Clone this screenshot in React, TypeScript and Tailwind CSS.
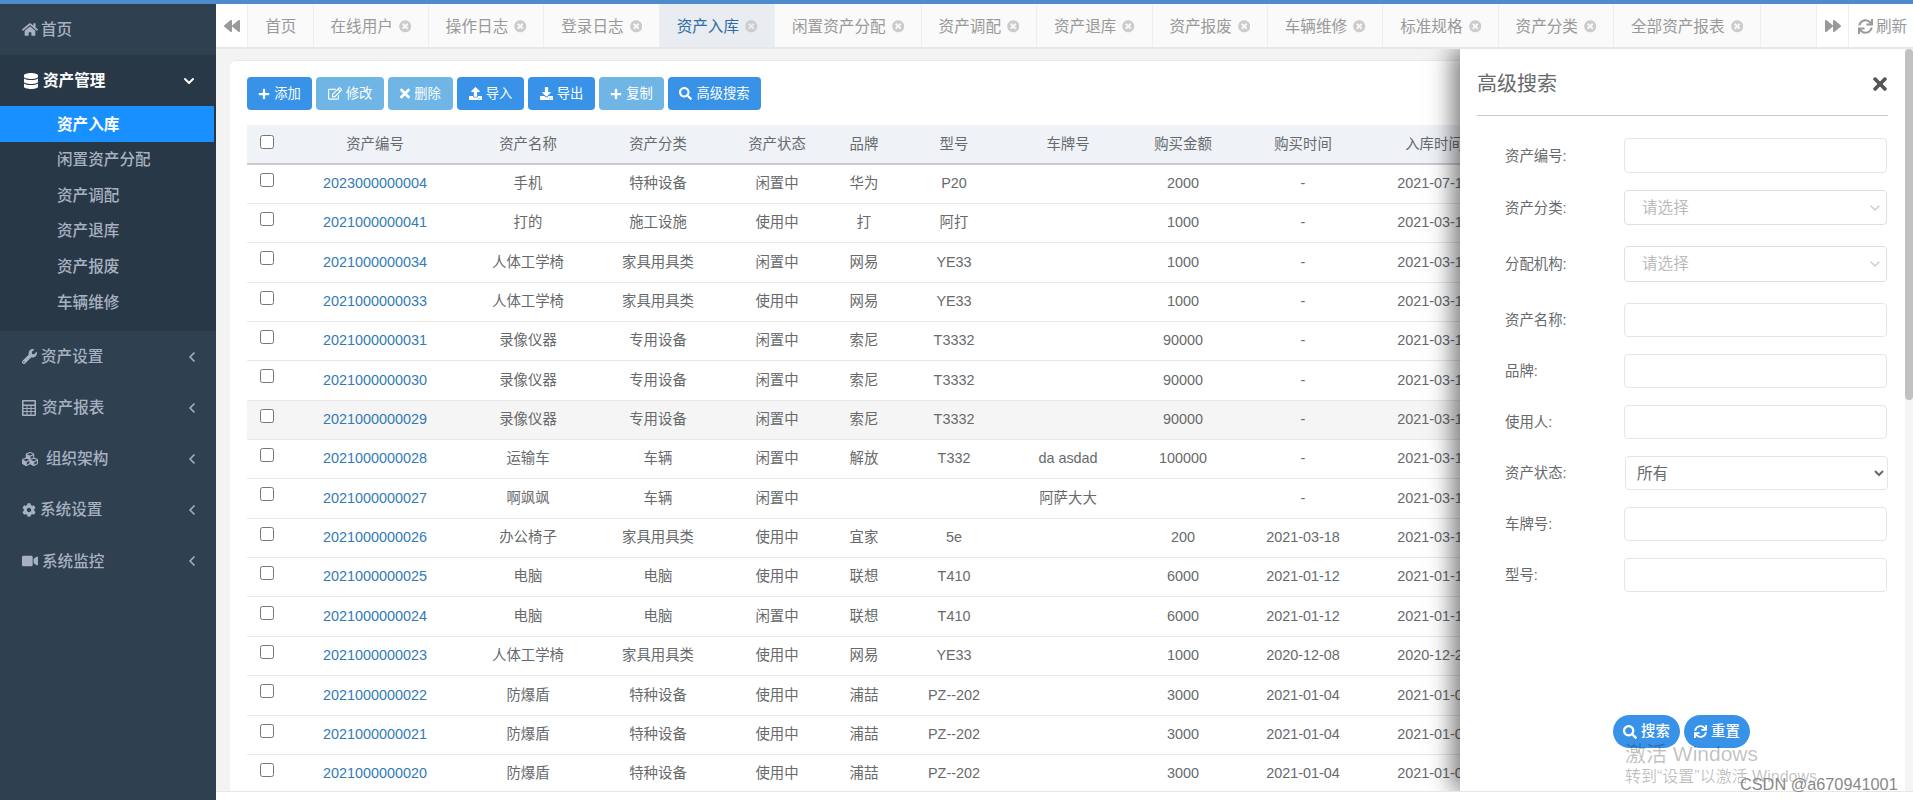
import type { ComponentType } from "react";
import {
  FaBackward,
  FaCog,
  FaCubes,
  FaDatabase,
  FaDownload,
  FaForward,
  FaHome,
  FaPlus,
  FaRegEdit,
  FaSearch,
  FaSync,
  FaTimes,
  FaTimesCircle,
  FaUpload,
  FaVideo,
  FaWrench,
} from "react-icons/fa";
import { ChevronDown, ChevronLeft } from "lucide-react";

type Icon = ComponentType<{ className?: string }>;

// fa-calculator from the old icon font, react-icons only has the solid one
const CalculatorIcon = ({ className }: { className?: string }) => (
  <svg viewBox="0 0 14 16" fill="currentColor" className={className}>
    <path
      fillRule="evenodd"
      d="M1 0h12a1 1 0 0 1 1 1v14a1 1 0 0 1-1 1H1a1 1 0 0 1-1-1V1a1 1 0 0 1 1-1zM1.5 1.5v3h11v-3zM1.5 6v2h3V6zM5.5 6v2h3V6zM9.5 6v2h3V6zM1.5 9v2h3V9zM5.5 9v2h3V9zM9.5 9v2h3V9zM1.5 12v2.5h3V12zM5.5 12v2.5h3V12zM9.5 12v2.5h3V12z"
    />
  </svg>
);

const subMenu = ["资产入库", "闲置资产分配", "资产调配", "资产退库", "资产报废", "车辆维修"];

const bottomMenu: { label: string; icon: Icon; iconClass: string }[] = [
  { label: "资产设置", icon: FaWrench, iconClass: "w-[15px] h-[15px] mr-[4px]" },
  { label: "资产报表", icon: CalculatorIcon, iconClass: "w-[14px] h-[16px] mr-[6px]" },
  { label: "组织架构", icon: FaCubes, iconClass: "w-[16px] h-[16px] mr-[8px]" },
  { label: "系统设置", icon: FaCog, iconClass: "w-[14px] h-[14px] mr-[4px]" },
  { label: "系统监控", icon: FaVideo, iconClass: "w-[16px] h-[16px] mr-[4px]" },
];

const tabs = [
  "在线用户",
  "操作日志",
  "登录日志",
  "资产入库",
  "闲置资产分配",
  "资产调配",
  "资产退库",
  "资产报废",
  "车辆维修",
  "标准规格",
  "资产分类",
  "全部资产报表",
];

const toolbar: { label: string; icon: Icon; className: string; iconClass: string }[] = [
  { label: "添加", icon: FaPlus, className: "w-[65px] bg-[#3893e8]", iconClass: "w-[12px] h-[12px]" },
  { label: "修改", icon: FaRegEdit, className: "w-[68px] bg-[#6fb5e6]", iconClass: "w-[14px] h-[13px]" },
  { label: "删除", icon: FaTimes, className: "w-[65px] bg-[#6fb5e6]", iconClass: "w-[10px] h-[15px]" },
  { label: "导入", icon: FaUpload, className: "w-[67px] bg-[#3893e8]", iconClass: "w-[13px] h-[13px]" },
  { label: "导出", icon: FaDownload, className: "w-[67px] bg-[#3893e8]", iconClass: "w-[13px] h-[13px]" },
  { label: "复制", icon: FaPlus, className: "w-[65px] bg-[#6fb5e6]", iconClass: "w-[12px] h-[12px]" },
  { label: "高级搜索", icon: FaSearch, className: "w-[93px] bg-[#3893e8]", iconClass: "w-[13px] h-[13px]" },
];

const columns = [38, 180, 126, 134, 104, 70, 110, 118, 112, 128, 134];
const headers = ["资产编号", "资产名称", "资产分类", "资产状态", "品牌", "型号", "车牌号", "购买金额", "购买时间", "入库时间"];

const rows = [
  ["2023000000004", "手机", "特种设备", "闲置中", "华为", "P20", "", "2000", "-", "2021-07-14"],
  ["2021000000041", "打的", "施工设施", "使用中", "打", "阿打", "", "1000", "-", "2021-03-18"],
  ["2021000000034", "人体工学椅", "家具用具类", "闲置中", "网易", "YE33", "", "1000", "-", "2021-03-18"],
  ["2021000000033", "人体工学椅", "家具用具类", "使用中", "网易", "YE33", "", "1000", "-", "2021-03-18"],
  ["2021000000031", "录像仪器", "专用设备", "闲置中", "索尼", "T3332", "", "90000", "-", "2021-03-18"],
  ["2021000000030", "录像仪器", "专用设备", "闲置中", "索尼", "T3332", "", "90000", "-", "2021-03-18"],
  ["2021000000029", "录像仪器", "专用设备", "闲置中", "索尼", "T3332", "", "90000", "-", "2021-03-18"],
  ["2021000000028", "运输车", "车辆", "闲置中", "解放", "T332", "da asdad", "100000", "-", "2021-03-18"],
  ["2021000000027", "啊飒飒", "车辆", "闲置中", "", "", "阿萨大大", "", "-", "2021-03-18"],
  ["2021000000026", "办公椅子", "家具用具类", "使用中", "宜家", "5e", "", "200", "2021-03-18", "2021-03-18"],
  ["2021000000025", "电脑", "电脑", "使用中", "联想", "T410", "", "6000", "2021-01-12", "2021-01-18"],
  ["2021000000024", "电脑", "电脑", "闲置中", "联想", "T410", "", "6000", "2021-01-12", "2021-01-18"],
  ["2021000000023", "人体工学椅", "家具用具类", "使用中", "网易", "YE33", "", "1000", "2020-12-08", "2020-12-28"],
  ["2021000000022", "防爆盾", "特种设备", "使用中", "浦喆", "PZ--202", "", "3000", "2021-01-04", "2021-01-08"],
  ["2021000000021", "防爆盾", "特种设备", "使用中", "浦喆", "PZ--202", "", "3000", "2021-01-04", "2021-01-08"],
  ["2021000000020", "防爆盾", "特种设备", "使用中", "浦喆", "PZ--202", "", "3000", "2021-01-04", "2021-01-08"],
];

const fields: { label: string; kind: "input" | "choose" | "status"; rowClass: string }[] = [
  { label: "资产编号:", kind: "input", rowClass: "h-[35px] mb-[17px]" },
  { label: "资产分类:", kind: "choose", rowClass: "h-[35px] mb-[21px]" },
  { label: "分配机构:", kind: "choose", rowClass: "h-[36px] mb-[21px]" },
  { label: "资产名称:", kind: "input", rowClass: "h-[34px] mb-[17px]" },
  { label: "品牌:", kind: "input", rowClass: "h-[34px] mb-[17px]" },
  { label: "使用人:", kind: "input", rowClass: "h-[34px] mb-[17px]" },
  { label: "资产状态:", kind: "status", rowClass: "h-[34px] mb-[17px]" },
  { label: "车牌号:", kind: "input", rowClass: "h-[34px] mb-[17px]" },
  { label: "型号:", kind: "input", rowClass: "h-[34px] mb-[17px]" },
];

const Sidebar = () => (
  <aside className="w-[216px] shrink-0 bg-[#2f4050] text-[15.6px] font-medium text-[#a7b1c2]">
    <div className="flex h-[51px] items-center pl-[22px]">
      <FaHome className="mr-[3px] h-[15px] w-[16px]" />
      首页
    </div>
    <div className="h-[276px] bg-[#293846]">
      <div className="flex h-[51px] items-center pt-[1px] pr-[19px] pl-[24px] font-bold text-white">
        <FaDatabase className="mr-[5px] h-[16px] w-[14px]" />
        <span className="flex-1">资产管理</span>
        <ChevronDown className="h-[16px] w-[16px]" strokeWidth={3} />
      </div>
      {subMenu.map((item, i) => (
        <div
          key={item}
          className={`flex h-[35.6px] items-center pt-[1px] pl-[57px] ${i === 0 ? "w-[214px] bg-[#1890ff] font-bold text-white" : ""}`}
        >
          {item}
        </div>
      ))}
    </div>
    {bottomMenu.map((item) => (
      <div key={item.label} className="flex h-[51.2px] items-center pr-[16px] pl-[22px]">
        <item.icon className={item.iconClass} />
        <span className="flex-1">{item.label}</span>
        <ChevronLeft className="h-[16px] w-[16px]" strokeWidth={2.5} />
      </div>
    ))}
  </aside>
);

const TabBar = () => (
  <div className="relative z-20 flex h-[45px] shrink-0 border-b-2 border-[#e7e7e7] bg-white text-[15.6px] text-[#999999]">
    <div className="flex w-[32px] items-center justify-center border-r border-[#eeeeee]">
      <FaBackward className="h-[16px] w-[16px]" />
    </div>
    <div className="flex flex-1 bg-[#fafafa]">
      <div className="flex items-center border-r border-[#eeeeee] pt-[2px] pr-[16.25px] pl-[17.25px]">首页</div>
      {tabs.map((tab) => (
        <div
          key={tab}
          className={`flex items-center gap-[6px] border-r border-[#eeeeee] px-[16.75px] pt-[2px] ${tab === "资产入库" ? "bg-[#e9ecf1] text-[#2e6da4]" : ""}`}
        >
          {tab}
          <FaTimesCircle className="h-[12.5px] w-[12.5px] text-[#cccccc]" />
        </div>
      ))}
    </div>
    <div className="flex w-[33px] items-center justify-center border-x border-[#eeeeee]">
      <FaForward className="h-[16px] w-[16px]" />
    </div>
    <div className="flex w-[64px] items-center gap-[3px] pt-[2px] pl-[9px]">
      <FaSync className="h-[15px] w-[15px]" />
      刷新
    </div>
  </div>
);

const AssetTable = () => (
  <table className="w-[1254px] table-fixed border-collapse text-center text-[14.4px] text-[#676a6c]">
    <colgroup>
      {columns.map((w, i) => (
        <col key={i} style={{ width: w }} />
      ))}
    </colgroup>
    <thead>
      <tr className="h-[39px] border-b-2 border-[#c9cacc] bg-[#eff2f7]">
        <th className="pb-[5px] pl-[1px] font-normal">
          <input type="checkbox" className="h-[14px] w-[14px] align-middle" />
        </th>
        {headers.map((h) => (
          <th key={h} className="pt-[2px] font-normal whitespace-nowrap">
            {h}
          </th>
        ))}
      </tr>
    </thead>
    <tbody>
      {rows.map((row, i) => (
        <tr key={row[0]} className={`h-[39.36px] border-b border-[#e7e7e7] ${i === 6 ? "bg-[#f5f5f5]" : ""}`}>
          <td className="pb-[9px] pl-[1px]">
            <input type="checkbox" className="h-[14px] w-[14px] align-middle" />
          </td>
          {row.map((cell, j) => (
            <td key={j} className={`whitespace-nowrap ${j === 0 ? "text-[#337ab7]" : ""}`}>
              {cell}
            </td>
          ))}
        </tr>
      ))}
    </tbody>
  </table>
);

const SearchField = ({ kind }: { kind: "input" | "choose" | "status" }) => {
  if (kind === "status") {
    return (
      <select className="ml-[1px] h-full w-[263px] rounded-[4px] border border-[#e5e6e7] pl-[7px] text-[15.6px] text-[#676a6c]">
        <option>所有</option>
      </select>
    );
  }
  if (kind === "choose") {
    return (
      <div className="flex h-full w-[263px] items-center justify-between rounded-[4px] border border-[#dcdfe6] pr-[3px] pl-[17px] text-[15.6px] text-[#bbbbbb]">
        请选择
        <ChevronDown className="h-[16px] w-[16px] text-[#cccccc]" />
      </div>
    );
  }
  return <input className="h-full w-[263px] rounded-[4px] border border-[#e5e6e7]" />;
};

const SearchPanel = () => (
  <div className="absolute inset-y-0 right-0 flex w-[445px] flex-col bg-white pl-[17px] text-[#676a6c] shadow-[-8px_0_22px_rgba(0,0,0,0.5)]">
    <div className="mr-[17px] flex h-[67px] shrink-0 items-center justify-between border-b border-[#cccccc] pt-[3px] pr-[1px]">
      <span className="text-[20px]">高级搜索</span>
      <FaTimes className="h-[20px] w-[14px] text-[#555555]" />
    </div>
    <div className="mt-[22px] pl-[28px] text-[14.4px]">
      {fields.map((f) => (
        <div key={f.label} className={`flex items-center ${f.rowClass}`}>
          <span className="w-[119px] pt-[2px]">{f.label}</span>
          <SearchField kind={f.kind} />
        </div>
      ))}
    </div>
    <div className="mt-auto mb-[43px] ml-[136px] flex gap-[4px] text-[14.4px] font-medium text-white">
      <div className="flex h-[33px] w-[67px] items-center justify-center gap-[4px] rounded-full bg-[#3893e8]">
        <FaSearch className="h-[14px] w-[14px]" />
        搜索
      </div>
      <div className="flex h-[33px] w-[66px] items-center justify-center gap-[4px] rounded-full bg-[#3893e8]">
        <FaSync className="h-[13px] w-[13px]" />
        重置
      </div>
    </div>
  </div>
);

export default function App() {
  return (
    <div className="relative flex h-[800px] flex-col overflow-hidden bg-white font-['Liberation_Sans','Noto_Sans_CJK_SC',sans-serif]">
      <div className="h-[4px] shrink-0 bg-[#4e8bcd]" />
      <div className="flex min-h-0 flex-1">
        <Sidebar />
        <div className="flex min-w-0 flex-1 flex-col">
          <TabBar />
          <div className="flex h-[742px] shrink-0">
            <div className="relative min-w-0 flex-1 overflow-hidden bg-[#f3f3f4] pt-[11px] pl-[14px]">
              <div className="h-[760px] rounded-tl-[6px] border-t border-[#e7eaec] bg-white pt-[16px] pl-[17px]">
                <div className="flex gap-[4px] text-[13.3px] text-white">
                  {toolbar.map((b) => (
                    <div
                      key={b.label}
                      className={`flex h-[33px] items-center justify-center gap-[4px] rounded-[4px] ${b.className}`}
                    >
                      <b.icon className={b.iconClass} />
                      {b.label}
                    </div>
                  ))}
                </div>
                <div className="mt-[15px]">
                  <AssetTable />
                </div>
              </div>
              <SearchPanel />
            </div>
            <div className="z-10 w-[8px] shrink-0 bg-[#f5f5f5]">
              <div className="h-[351px] rounded-[4px] bg-[#c1c1c1]" />
            </div>
          </div>
          <div className="flex-1 border-t border-[#e7e7e7]" />
        </div>
      </div>
      <div className="pointer-events-none absolute top-[739px] left-[1625px] z-30 text-[21px] leading-[30px] text-black/25">
        激活 Windows
      </div>
      <div className="pointer-events-none absolute top-[767px] left-[1625px] z-30 text-[16px] leading-[20px] text-black/25">
        转到“设置”以激活 Windows
      </div>
      <div className="pointer-events-none absolute top-[774px] left-[1740px] z-30 text-[16.3px] leading-[20px] text-[#888888]">
        CSDN @a670941001
      </div>
    </div>
  );
}
